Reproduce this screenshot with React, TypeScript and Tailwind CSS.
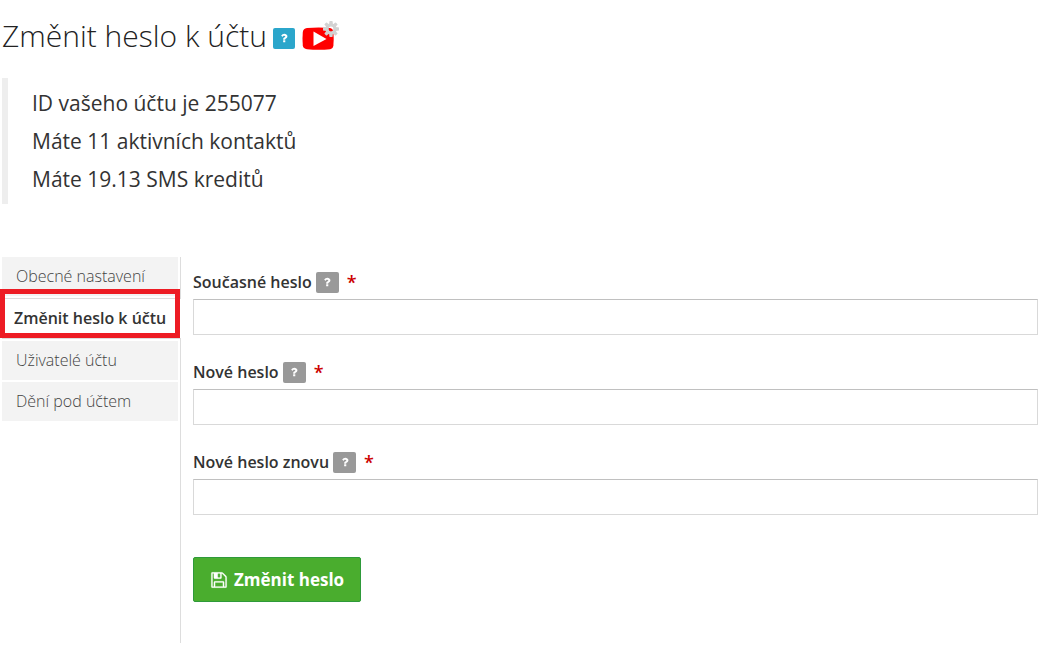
import React from "react";

function QuestionIcon({ className }: { className: string }) {
  return (
    <svg viewBox="0 0 1792 1792" className={className} fill="currentColor" aria-hidden="true">
      <path d="M1088 1256v240q0 16-12 28t-28 12h-240q-16 0-28-12t-12-28v-240q0-16 12-28t28-12h240q16 0 28 12t12 28zm316-600q0 54-15.5 101t-35 76.5-55 59.5-57.5 43.5-61 35.5q-41 23-68.5 65t-27.5 67q0 17-12 32.5t-28 15.5h-240q-15 0-25.5-18.5t-10.5-37.5v-45q0-83 65-156.5t143-108.5q59-27 84-56t25-76q0-42-46.5-74t-107.5-32q-65 0-108 29-35 25-107 115-13 16-31 16-12 0-25-8l-164-125q-13-10-15.5-25t5.5-28q160-266 464-266 80 0 161 31t146 83 106 127.5 41 158.5z" />
    </svg>
  );
}

function SaveIcon() {
  return (
    <svg
      viewBox="0 0 1792 1792"
      className="size-[18px]"
      fill="currentColor"
      stroke="currentColor"
      strokeWidth="20"
      aria-hidden="true"
    >
      <path d="M512 1536h768v-384h-768v384zm896 0h128v-896q0-14-10-38.5t-20-34.5l-281-281q-10-10-34-20t-39-10v416q0 40-28 68t-68 28h-576q-40 0-68-28t-28-68v-416h-128v1280h128v-416q0-40 28-68t68-28h832q40 0 68 28t28 68v416zm-384-928v-320q0-13-9.5-22.5t-22.5-9.5h-192q-13 0-22.5 9.5t-9.5 22.5v320q0 13 9.5 22.5t22.5 9.5h192q13 0 22.5-9.5t9.5-22.5zm640 32v928q0 40-28 68t-68 28h-1344q-40 0-68-28t-28-68v-1344q0-40 28-68t68-28h928q40 0 88 20t76 48l280 280q28 28 48 76t20 88z" />
    </svg>
  );
}

const teeth = [0, 45, 90, 135, 180, 225, 270, 315];

function VideoIcon() {
  return (
    <svg viewBox="0 0 38 32" className="h-8 w-[38px]" aria-hidden="true">
      <path
        d="M5 8Q17 7 28 8Q31 8.4 31.4 12Q32 19 31.4 25.5Q31 28.8 28 29.2Q17 30.4 5 29.2Q1.2 28.8 .8 25.5Q.2 19 .8 12Q1.2 8.4 5 8Z"
        fill="#ff0000"
      />
      <path d="M11.5 11.5v14.5l13-7z" fill="#fff" />
      <g fill="#d2d2d2">
        <path
          fillRule="evenodd"
          d="M29 3.2a5.8 5.8 0 1 0 0 11.6a5.8 5.8 0 1 0 0-11.6zm0 3.4a2.4 2.4 0 1 1 0 4.8a2.4 2.4 0 1 1 0-4.8z"
        />
        {teeth.map((angle) => (
          <rect key={angle} x="27.3" y="1" width="3.4" height="4" rx=".8" transform={`rotate(${angle} 29 9)`} />
        ))}
      </g>
    </svg>
  );
}

const tabs = ["Obecné nastavení", "Změnit heslo k účtu", "Uživatelé účtu", "Dění pod účtem"];

const fields = [
  { id: "current-password", label: "Současné heslo" },
  { id: "new-password", label: "Nové heslo" },
  { id: "new-password-again", label: "Nové heslo znovu" },
];

function Field({ id, label }: { id: string; label: string }) {
  return (
    <div>
      <div className="flex h-8 items-center pb-[3px]">
        <label htmlFor={id} className="text-base leading-6 font-semibold">
          {label}
        </label>
        <button
          type="button"
          aria-label={`Nápověda: ${label}`}
          className="mt-px ml-1 flex h-[21px] w-[23px] items-center justify-center rounded-xs bg-[#999] text-white"
        >
          <QuestionIcon className="size-3" />
        </button>
        <span className="ml-2 text-lg leading-6 font-semibold text-[#c00]">*</span>
      </div>
      <input
        id={id}
        type="password"
        className="block h-9 w-full border border-[#d9d9d9] border-t-[#c0c0c0] bg-white px-3 text-base outline-none"
      />
    </div>
  );
}

export default function App() {
  return (
    <main className="bg-white pr-6 pl-0.5 font-['Open_Sans',sans-serif] text-[#333]">
      <header className="flex h-[78px] items-center pb-1.5">
        <h1 className="text-[30px] leading-10 font-light text-[#222]">Změnit heslo k účtu</h1>
        <button
          type="button"
          aria-label="Nápověda"
          className="mt-1 ml-1.5 flex h-[21px] w-[22px] items-center justify-center rounded-xs bg-[#2ba6cb] text-white"
        >
          <QuestionIcon className="size-3" />
        </button>
        <a href="#video" aria-label="Video návod" className="ml-[7px]">
          <VideoIcon />
        </a>
      </header>

      <blockquote className="border-l-6 border-[#eee] py-1.5 pl-6 text-[21px] leading-[38px] font-normal">
        <p>ID vašeho účtu je 255077</p>
        <p>Máte 11 aktivních kontaktů</p>
        <p>Máte 19.13 SMS kreditů</p>
      </blockquote>

      <div className="mt-[53px] flex">
        <nav className="w-[179px] shrink-0 border-r border-[#ddd]">
          <ul className="flex flex-col gap-0.5">
            {tabs.map((tab, index) =>
              index === 1 ? (
                <li key={tab} className="relative -mr-px border-y border-[#ddd] bg-white">
                  <a
                    href="#heslo"
                    aria-current="page"
                    className="flex h-[39px] items-center pb-0.5 pl-3 text-base font-semibold whitespace-nowrap"
                  >
                    {tab}
                  </a>
                  <span className="pointer-events-none absolute -top-2.5 right-px bottom-0 -left-0.5 border-5 border-[#ed1c24]" />
                </li>
              ) : (
                <li key={tab} className="mr-0.5">
                  <a
                    href="#nastaveni"
                    className="flex h-[39px] items-center bg-[#f3f3f3] pb-0.5 pl-3.5 text-base font-light text-[#444]"
                  >
                    {tab}
                  </a>
                </li>
              ),
            )}
          </ul>
        </nav>

        <form className="min-w-0 flex-1 pt-2.5 pb-[41px] pl-3" onSubmit={(event) => event.preventDefault()}>
          <div className="flex flex-col gap-[22px]">
            {fields.map((field) => (
              <Field key={field.id} {...field} />
            ))}
          </div>
          <button
            type="submit"
            className="mt-[42px] flex h-[45px] items-center gap-1.5 rounded-xs border border-[#2e9a3a] bg-[#4aad2e] px-4 text-[17px] font-bold text-white"
          >
            <SaveIcon />
            Změnit heslo
          </button>
        </form>
      </div>
    </main>
  );
}
